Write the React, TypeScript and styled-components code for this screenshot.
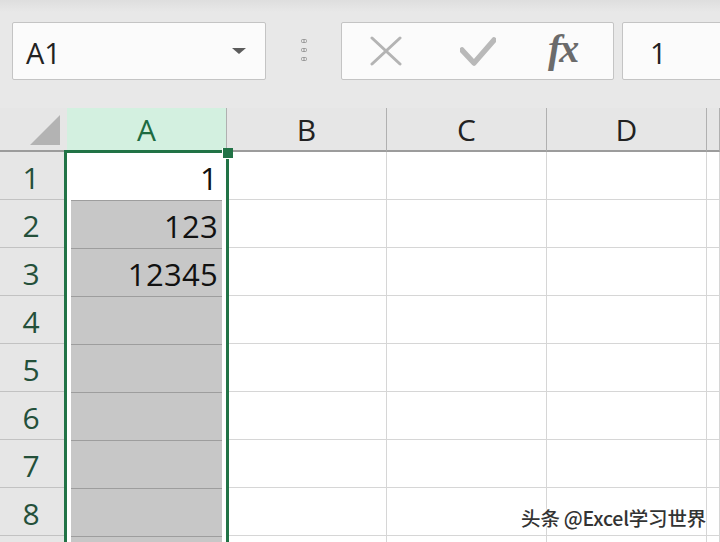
import React from "react";
import styled, { createGlobalStyle } from "styled-components";

const Global = createGlobalStyle`
  html, body { margin: 0; padding: 0; background: #e8e8e8; overflow: hidden; }
  body { width: 720px; height: 542px; font-family: "Open Sans", "Noto Sans", sans-serif; }
`;

const Page = styled.div`
  position: relative;
  width: 720px;
  height: 542px;
  overflow: hidden;
  background: #e8e8e8;
  display: flex;
  flex-direction: column;
`;

const Toolbar = styled.div`
  height: 108px;
  flex: none;
  display: flex;
  align-items: flex-start;
  padding: 22px 0 0 12px;
  box-sizing: border-box;
  background: linear-gradient(#dedede 0px, #e8e8e8 12px, #e8e8e8 100%);
`;

const Box = styled.div<{ $w: number; $ml?: number }>`
  width: ${(p) => p.$w}px;
  margin-left: ${(p) => p.$ml ?? 0}px;
  height: 58px;
  box-sizing: border-box;
  flex: none;
  background: #fbfbfb;
  border: 1px solid #c4c4c4;
  border-radius: 2px;
  display: flex;
  align-items: center;
`;

const NameText = styled.span`
  font-size: 29px;
  color: #222;
  margin-left: 13px;
  flex: 1;
  line-height: 1;
  padding-top: 2px;
`;

const Grip = styled.div`
  width: 75px;
  height: 58px;
  flex: none;
  display: flex;
  align-items: center;
  justify-content: center;
`;

const FxButtons = styled.div`
  flex: 1;
  display: flex;
  align-items: center;
  height: 100%;
  padding-left: 28px;
`;

const IconSlot = styled.div<{ $w: number }>`
  width: ${(p) => p.$w}px;
  display: flex;
  align-items: center;
`;

const Fx = styled.span`
  font-family: "Liberation Serif", "DejaVu Serif", serif;
  font-style: italic;
  font-weight: 700;
  font-size: 40px;
  color: #6b6b6b;
  letter-spacing: -2px;
  line-height: 1;
  padding-bottom: 4px;
`;

const FormulaText = styled.span`
  font-size: 29px;
  color: #222;
  margin-left: 27px;
  line-height: 1;
  padding-top: 2px;
`;

const Sheet = styled.div`
  position: relative;
  flex: 1;
  display: grid;
  grid-template-columns: 67px 160px 160px 160px 160px 1fr;
  grid-template-rows: 44px repeat(9, 48px);
  background: #ffffff;
`;

const Corner = styled.div`
  background: #e6e6e6;
  border-bottom: 2px solid #9c9c9c;
  box-sizing: border-box;
  position: relative;
`;

const ColHead = styled.div<{ $sel?: boolean }>`
  background: ${(p) => (p.$sel ? "#d3f0e0" : "#e6e6e6")};
  color: ${(p) => (p.$sel ? "#1d6b41" : "#222")};
  border-right: 1px solid #b0b0b0;
  border-bottom: 2px solid ${(p) => (p.$sel ? "#217346" : "#9c9c9c")};
  box-sizing: border-box;
  display: flex;
  align-items: center;
  justify-content: center;
  font-size: 30px;
  line-height: 1;
  padding-top: 2px;
`;

const RowHead = styled.div<{ $sel?: boolean }>`
  background: #e6e6e6;
  color: ${(p) => (p.$sel ? "#24503a" : "#333")};
  border-bottom: 1px solid #c2c2c2;
  border-right: 1px solid #b0b0b0;
  box-sizing: border-box;
  display: flex;
  align-items: center;
  justify-content: center;
  font-size: 30px;
  line-height: 1;
  padding-right: 4px;
  padding-top: 4px;
`;

const Cell = styled.div`
  border-right: 1px solid #d6d6d6;
  border-bottom: 1px solid #d6d6d6;
  box-sizing: border-box;
`;

const ACell = styled.div`
  box-sizing: border-box;
  padding: 0 5px 0 4px;
  display: flex;
  background: #fff;
`;

const AFill = styled.div<{ $shade?: boolean }>`
  flex: 1;
  background: ${(p) => (p.$shade ? "#c7c7c7" : "#fff")};
  border-top: 1px solid ${(p) => (p.$shade ? "#9d9d9d" : "transparent")};
  display: flex;
  align-items: center;
  justify-content: flex-end;
  padding-right: 4px;
  padding-top: 4px;
  font-size: 31px;
  color: #111;
  line-height: 1;
  letter-spacing: 0.3px;
`;

const Selection = styled.div`
  position: absolute;
  left: 64px;
  top: 42px;
  width: 165px;
  bottom: -10px;
  border: 3px solid #217346;
  box-sizing: border-box;
  pointer-events: none;
`;

const Handle = styled.div`
  position: absolute;
  left: 222px;
  top: 40px;
  width: 10px;
  height: 10px;
  background: #217346;
  border: 1px solid #fff;
  border-top: none;
  border-right: none;
`;

const Watermark = styled.div`
  position: absolute;
  right: 14px;
  bottom: 10px;
  font-family: "Noto Sans CJK SC", "Noto Sans", sans-serif;
  font-size: 19.5px;
  font-weight: 500;
  color: #333;
  text-shadow: 0 0 2px #fff, 0 0 2px #fff, 0 0 3px #fff;
  letter-spacing: -0.2px;
`;

const cols = ["B", "C", "D", ""];
const values: Record<number, string> = { 1: "1", 2: "123", 3: "12345" };

export default function App() {
  const rows = Array.from({ length: 9 }, (_, i) => i + 1);
  return (
    <Page>
      <Global />
      <Toolbar>
        <Box $w={254}>
          <NameText>A1</NameText>
          <svg width="16" height="8" viewBox="0 0 16 8" style={{ marginRight: 18 }}>
            <path d="M1 1 H15 L8 7 Z" fill="#5c5c5c" />
          </svg>
        </Box>
        <Grip>
          <svg width="8" height="26" viewBox="0 0 8 26">
            {[3, 12, 21].map((y) => (
              <g key={y} fill="none" stroke="#9a9a9a" strokeWidth="1">
                <rect x="1.5" y={y - 1.5} width="5" height="3" rx="1" />
                <line x1="4" y1={y - 1.5} x2="4" y2={y + 1.5} />
              </g>
            ))}
          </svg>
        </Grip>
        <Box $w={273}>
          <FxButtons>
            <IconSlot $w={90}>
              <svg width="32" height="30" viewBox="0 0 32 30">
                <path d="M2 2 L30 28 M30 2 L2 28" stroke="#b4b4b4" strokeWidth="3" strokeLinecap="round" />
              </svg>
            </IconSlot>
            <IconSlot $w={88}>
              <svg width="36" height="30" viewBox="0 0 36 30">
                <path d="M2 14 L14 27 L34 4" stroke="#b9b9b9" strokeWidth="5.5" fill="none" strokeLinecap="round" strokeLinejoin="round" />
              </svg>
            </IconSlot>
            <IconSlot $w={40}>
              <Fx>fx</Fx>
            </IconSlot>
          </FxButtons>
        </Box>
        <Box $w={120} $ml={8}>
          <FormulaText>1</FormulaText>
        </Box>
      </Toolbar>
      <Sheet>
        <Corner>
          <svg width="32" height="32" viewBox="0 0 32 32" style={{ position: "absolute", left: 29, top: 6 }}>
            <path d="M1 31 L31 1 L31 31 Z" fill="#b3b3b3" />
          </svg>
        </Corner>
        <ColHead $sel>A</ColHead>
        {cols.map((c, i) => (
          <ColHead key={i}>{c}</ColHead>
        ))}
        {rows.map((r) => (
          <React.Fragment key={r}>
            <RowHead $sel={r <= 8}>{r <= 8 ? r : ""}</RowHead>
            <ACell>
              <AFill $shade={r > 1}>{values[r] ?? ""}</AFill>
            </ACell>
            {cols.map((_, i) => (
              <Cell key={i} />
            ))}
          </React.Fragment>
        ))}
        <Selection />
        <Handle />
      </Sheet>
      <Watermark>头条 @Excel学习世界</Watermark>
    </Page>
  );
}
